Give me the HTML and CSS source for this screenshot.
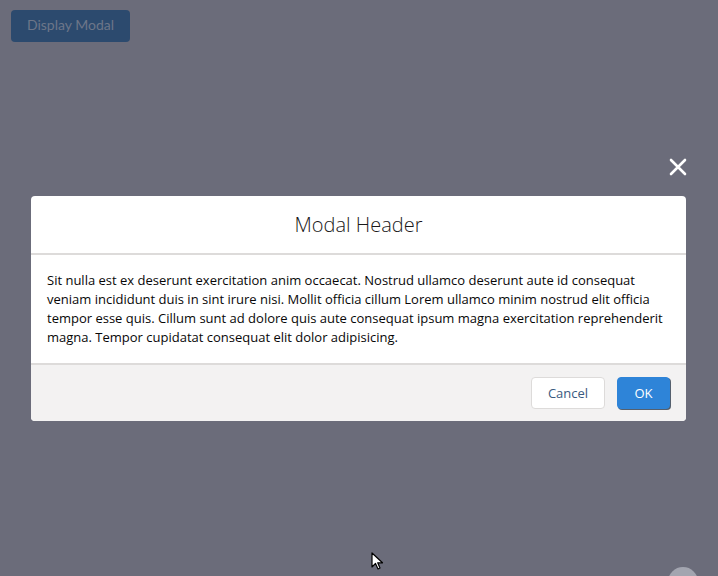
FILE: index.html
```html
<!DOCTYPE html>
<html>
<head>
<meta charset="utf-8">
<link rel="stylesheet" href="styles.css">
</head>
<body>
<div class="page">
  <button class="display-btn">Display Modal</button>
  <div class="modal-wrap">
    <div class="close-row">
      <svg class="close-icon" width="18" height="18" viewBox="0 0 18 18"><path d="M2 2 L16 16 M16 2 L2 16" stroke="#ffffff" stroke-width="2.6" stroke-linecap="round"/></svg>
    </div>
    <div class="modal">
      <div class="modal-header">Modal Header</div>
      <div class="modal-body">Sit nulla est ex deserunt exercitation anim occaecat. Nostrud ullamco deserunt aute id consequat veniam incididunt duis in sint irure nisi. Mollit officia cillum Lorem ullamco minim nostrud elit officia tempor esse quis. Cillum sunt ad dolore quis aute consequat ipsum magna exercitation reprehenderit magna. Tempor cupidatat consequat elit dolor adipisicing.</div>
      <div class="modal-footer">
        <button class="btn btn-neutral">Cancel</button>
        <button class="btn btn-brand">OK</button>
      </div>
    </div>
  </div>
</div>
<svg class="cursor" width="14" height="20" viewBox="0 0 14 20"><path d="M1 1 L1 15 L4.5 11.5 L7 17 L9 16 L6.7 10.8 L11.5 10.8 Z" fill="#ffffff" stroke="#000000" stroke-width="1.2" stroke-linejoin="round"/></svg>
<div class="corner-dot"></div>
</body>
</html>
```

FILE: styles.css
```css
html, body {
  margin: 0;
  padding: 0;
  height: 100%;
  overflow: hidden;
}
body {
  background: #6b6c7a;
  font-family: "Open Sans", Lato, Arial, sans-serif;
  position: relative;
}
.page {
  padding: 10px 0 0 11px;
}
.display-btn {
  display: block;
  width: 119px;
  height: 32px;
  background: #2c4a6e;
  color: #6c7689;
  border: none;
  border-radius: 4px;
  font-family: Lato, sans-serif;
  font-size: 14px;
  padding: 0 0 3px 0;
}
.modal-wrap {
  width: 655px;
  margin: 116px 0 0 20px;
}
.close-row {
  display: flex;
  justify-content: flex-end;
  height: 38px;
  margin-right: -1px;
}
.close-icon {
  display: block;
}
.modal {
  background: #ffffff;
  border-radius: 4px;
  overflow: hidden;
}
.modal-header {
  padding: 16px;
  text-align: center;
  font-size: 20px;
  font-weight: 300;
  line-height: 25px;
  color: #1a1919;
  border-bottom: 2px solid #dddbda;
}
.modal-body {
  padding: 16px;
  font-size: 13px;
  line-height: 19px;
  color: #080707;
}
.modal-footer {
  background: #f3f2f2;
  border-top: 2px solid #dddbda;
  padding: 12px 16px;
  display: flex;
  justify-content: flex-end;
  gap: 12px;
}
.btn {
  height: 32px;
  border-radius: 4px;
  font-family: "Open Sans", sans-serif;
  font-size: 13px;
  padding: 0;
}
.btn-neutral {
  background: #ffffff;
  border: 1px solid #dddbda;
  color: #3a5a80;
  width: 74px;
}
.btn-brand {
  background: #2e84d8;
  border: 1px solid #2e84d8;
  color: #ffffff;
  width: 53px;
  box-shadow: 1px 1px 0 #55606e;
}
.cursor {
  position: absolute;
  left: 371px;
  top: 552px;
}
.corner-dot {
  position: absolute;
  left: 668px;
  top: 567px;
  width: 30px;
  height: 30px;
  border-radius: 50%;
  background: #a3a5b0;
}
```
